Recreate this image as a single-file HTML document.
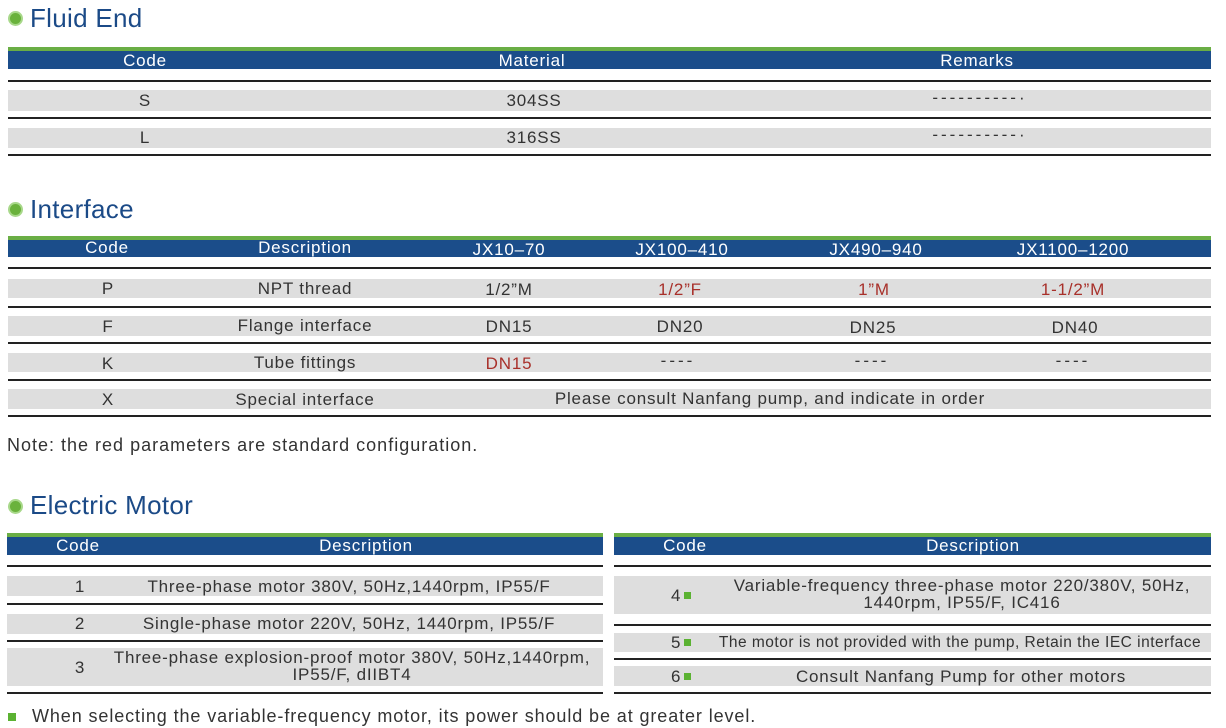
<!DOCTYPE html>
<html><head><meta charset="utf-8"><style>
*{margin:0;padding:0;box-sizing:border-box}
body{width:1226px;height:728px;background:#fff;position:relative;overflow:hidden;font-family:"Liberation Sans",sans-serif;color:#333}
.a{position:absolute}
.t{position:absolute;font-size:26px;color:#1b4a87;line-height:28px;letter-spacing:0.3px}
.dot{position:absolute;width:15px;height:15px;border-radius:50%;background:#6ab23c;border:2px solid #a8d88a}
.g{position:absolute;background:#6aae45;height:4px}
.b{position:absolute;background:#1b4d8a}
.l{position:absolute;height:2px;background:#222}
.r{position:absolute;background:#dedede}
.c{position:absolute;text-align:center;white-space:nowrap;font-size:17px;line-height:19px;letter-spacing:0.8px;transform:translateX(-50%);margin-top:0px}
.h{color:#fff}
.red{color:#a8302a}
.sq{display:inline-block;width:7px;height:7px;background:#5bb232;margin-left:4px;vertical-align:2px}
</style></head><body>
<div class="dot" style="left:8px;top:11px"></div>
<div class="t" style="left:30px;top:4px">Fluid End</div>
<div class="g" style="left:8px;top:47px;width:1203px"></div>
<div class="b" style="left:8px;top:51px;width:1203px;height:18px"></div>
<div class="c h" style="left:145px;top:51px">Code</div>
<div class="c h" style="left:532px;top:51px">Material</div>
<div class="c h" style="left:977px;top:51px">Remarks</div>
<div class="l" style="left:8px;top:80px;width:1203px"></div>
<div class="r" style="left:8px;top:90px;width:1203px;height:21px"></div>
<div class="l" style="left:8px;top:117px;width:1203px"></div>
<div class="r" style="left:8px;top:128px;width:1203px;height:20px"></div>
<div class="l" style="left:8px;top:154px;width:1203px"></div>
<div class="c" style="left:145px;top:91px">S</div>
<div class="c" style="left:534px;top:91px">304SS</div>
<div class="c" style="left:980px;top:88px;letter-spacing:3px">----------·</div>
<div class="c" style="left:145px;top:128px">L</div>
<div class="c" style="left:534px;top:128px">316SS</div>
<div class="c" style="left:980px;top:125px;letter-spacing:3px">----------·</div>

<div class="dot" style="left:8px;top:202px"></div>
<div class="t" style="left:30px;top:195px">Interface</div>
<div class="g" style="left:8px;top:236px;width:1203px"></div>
<div class="b" style="left:8px;top:240px;width:1203px;height:17px"></div>
<div class="c h" style="left:107px;top:238px">Code</div>
<div class="c h" style="left:305px;top:238px">Description</div>
<div class="c h" style="left:509px;top:240px">JX10–70</div>
<div class="c h" style="left:682px;top:240px">JX100–410</div>
<div class="c h" style="left:876px;top:240px">JX490–940</div>
<div class="c h" style="left:1073px;top:240px">JX1100–1200</div>
<div class="l" style="left:8px;top:267px;width:1203px"></div>
<div class="r" style="left:8px;top:279px;width:1203px;height:19px"></div>
<div class="l" style="left:8px;top:306px;width:1203px"></div>
<div class="r" style="left:8px;top:316px;width:1203px;height:20px"></div>
<div class="l" style="left:8px;top:342px;width:1203px"></div>
<div class="r" style="left:8px;top:353px;width:1203px;height:19px"></div>
<div class="l" style="left:8px;top:379px;width:1203px"></div>
<div class="r" style="left:8px;top:389px;width:1203px;height:20px"></div>
<div class="l" style="left:8px;top:415px;width:1203px"></div>
<div class="c" style="left:108px;top:279px">P</div>
<div class="c" style="left:305px;top:279px">NPT thread</div>
<div class="c" style="left:509px;top:280px">1/2”M</div>
<div class="c red" style="left:680px;top:280px">1/2”F</div>
<div class="c red" style="left:874px;top:280px">1”M</div>
<div class="c red" style="left:1073px;top:280px">1-1/2”M</div>
<div class="c" style="left:108px;top:317px">F</div>
<div class="c" style="left:305px;top:316px">Flange interface</div>
<div class="c" style="left:509px;top:317px">DN15</div>
<div class="c" style="left:680px;top:317px">DN20</div>
<div class="c" style="left:873px;top:318px">DN25</div>
<div class="c" style="left:1075px;top:318px">DN40</div>
<div class="c" style="left:108px;top:354px">K</div>
<div class="c" style="left:305px;top:353px">Tube fittings</div>
<div class="c red" style="left:509px;top:354px">DN15</div>
<div class="c" style="left:678px;top:351px;letter-spacing:3px">----</div>
<div class="c" style="left:872px;top:351px;letter-spacing:3px">----</div>
<div class="c" style="left:1073px;top:351px;letter-spacing:3px">----</div>
<div class="c" style="left:108px;top:390px">X</div>
<div class="c" style="left:305px;top:390px">Special interface</div>
<div class="c" style="left:770px;top:389px">Please consult Nanfang pump, and indicate in order</div>
<div class="a" style="left:7px;top:435px;font-size:18px;letter-spacing:1px;white-space:nowrap">Note: the red parameters are standard configuration.</div>

<div class="dot" style="left:8px;top:499px"></div>
<div class="t" style="left:30px;top:491px">Electric Motor</div>
<div class="g" style="left:7px;top:533px;width:596px"></div>
<div class="b" style="left:7px;top:537px;width:596px;height:18px"></div>
<div class="g" style="left:614px;top:533px;width:597px"></div>
<div class="b" style="left:614px;top:537px;width:597px;height:18px"></div>
<div class="c h" style="left:78px;top:536px">Code</div>
<div class="c h" style="left:366px;top:536px">Description</div>
<div class="c h" style="left:685px;top:536px">Code</div>
<div class="c h" style="left:973px;top:536px">Description</div>

<div class="l" style="left:7px;top:565px;width:596px"></div>
<div class="r" style="left:7px;top:576px;width:596px;height:20px"></div>
<div class="l" style="left:7px;top:603px;width:596px"></div>
<div class="r" style="left:7px;top:614px;width:596px;height:20px"></div>
<div class="l" style="left:7px;top:640px;width:596px"></div>
<div class="r" style="left:7px;top:648px;width:596px;height:38px"></div>
<div class="l" style="left:7px;top:692px;width:596px"></div>
<div class="c" style="left:80px;top:577px">1</div>
<div class="c" style="left:349px;top:577px">Three-phase motor 380V, 50Hz,1440rpm, IP55/F</div>
<div class="c" style="left:80px;top:614px">2</div>
<div class="c" style="left:349px;top:614px">Single-phase motor 220V, 50Hz, 1440rpm, IP55/F</div>
<div class="c" style="left:80px;top:658px">3</div>
<div class="c" style="left:352px;top:649px;line-height:17px">Three-phase explosion-proof motor 380V, 50Hz,1440rpm,<br>IP55/F, dIIBT4</div>

<div class="l" style="left:614px;top:565px;width:597px"></div>
<div class="r" style="left:614px;top:576px;width:597px;height:38px"></div>
<div class="l" style="left:614px;top:624px;width:597px"></div>
<div class="r" style="left:614px;top:633px;width:597px;height:19px"></div>
<div class="l" style="left:614px;top:658px;width:597px"></div>
<div class="r" style="left:614px;top:666px;width:597px;height:20px"></div>
<div class="l" style="left:614px;top:692px;width:597px"></div>
<div class="a" style="left:671px;top:586px;font-size:17px">4<span class="sq"></span></div>
<div class="c" style="left:962px;top:577px;line-height:17px">Variable-frequency three-phase motor 220/380V, 50Hz,<br>1440rpm, IP55/F, IC416</div>
<div class="a" style="left:671px;top:633px;font-size:17px">5<span class="sq"></span></div>
<div class="c" style="left:960px;top:633px;font-size:15.5px;letter-spacing:0.5px">The motor is not provided with the pump, Retain the IEC interface</div>
<div class="a" style="left:671px;top:667px;font-size:17px">6<span class="sq"></span></div>
<div class="c" style="left:961px;top:667px">Consult Nanfang Pump for other motors</div>

<div class="a" style="left:8px;top:713px;width:8px;height:8px;background:#5bb232"></div>
<div class="a" style="left:32px;top:706px;font-size:18px;letter-spacing:0.9px;white-space:nowrap">When selecting the variable-frequency motor, its power should be at greater level.</div>
</body></html>
